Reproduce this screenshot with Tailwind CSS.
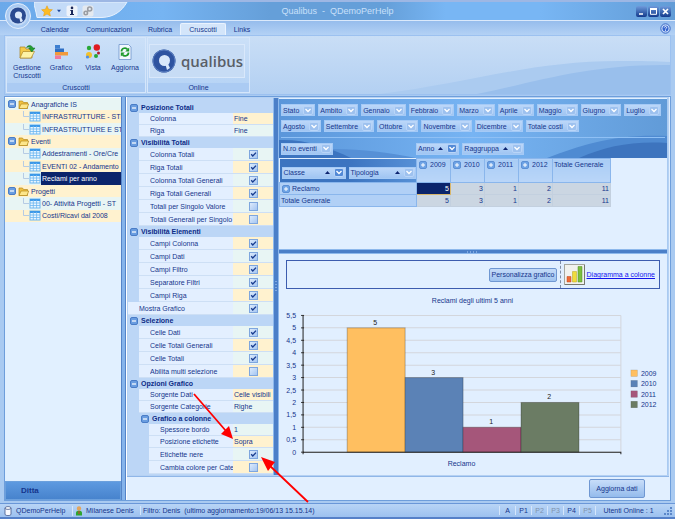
<!DOCTYPE html>
<html lang="it">
<head>
    <meta charset="UTF-8">
    <meta name="viewport" content="width=device-width, initial-scale=1.0">
    <title>Qualibus - QDemoPerHelp</title>
    <script src="https://cdn.jsdelivr.net/npm/@tailwindcss/browser@4"></script>
</head>
<body class="relative flex h-screen flex-col overflow-hidden bg-[#a9caf1] font-['Liberation_Sans',sans-serif] text-[7px] leading-[9px] text-[#15358c]">

    <!-- Title bar -->
    <header class="relative flex h-5 shrink-0 items-center border-t-2 border-[#9db7e4] bg-[linear-gradient(90deg,#6ba9ea_0%,#76b4f2_24%,#659fd9_40%,#659fd9_57%,#78b6f4_66%,#78b6f4_80%,#629cd6_100%)]">
        <svg class="absolute left-[34px] top-0 h-4 w-[94px]" viewBox="0 0 94 16">
            <path d="M0 0H93C88 9 80 15 68 15.500H3C2 9 0 4 0 0Z" fill="#c3dbf8" stroke="#e6f1fe" stroke-width="1"/>
        </svg>
        <nav class="relative ml-[41px] flex items-center gap-1">
            <button aria-label="Preferiti"><svg class="h-3 w-3" viewBox="0 0 12 12"><path d="M6 .8 7.600 4.300 11.400 4.700 8.600 7.200 9.400 11 6 9.100 2.600 11 3.400 7.200.6 4.700 4.400 4.300Z" fill="#fdbb24" stroke="#e59a10" stroke-width=".5"/></svg></button>
            <button aria-label="Apri elenco"><svg class="h-1 w-1" viewBox="0 0 4 4"><path d="M0 .8H4L2 3.200Z" fill="#1c479c"/></svg></button>
            <button class="ml-px h-3 w-3" aria-label="Informazioni"><svg viewBox="0 0 12 12"><rect x=".5" y=".5" width="11" height="11" rx="2" fill="#eef3fa"/><circle cx="6" cy="2.900" r="1.300" fill="#1b2758"/><path d="M4.300 5H7V9H8V10H4V9H5V6H4.300Z" fill="#1b2758"/></svg></button>
            <button class="h-3 w-3" aria-label="Collegamento"><svg viewBox="0 0 12 12"><rect x=".5" y=".5" width="11" height="11" rx="2" fill="#e4e9ef"/><g fill="none" stroke="#9a9da3" stroke-width="1.600"><circle cx="7.700" cy="4" r="2"/><circle cx="3.800" cy="8" r="1.700"/><path d="M6.300 5.500 5 6.800"/></g></svg></button>
        </nav>
        <h1 class="absolute inset-x-0 text-center text-[9px] text-[#c9e0fa]">Qualibus&nbsp; -&nbsp; QDemoPerHelp</h1>
        <div class="relative ml-auto mr-1 flex gap-px">
            <button class="h-[11px] w-[11px] rounded-xs bg-linear-to-b from-[#6f9bdc] to-[#143a8c]" aria-label="Riduci a icona"><svg viewBox="0 0 11 11"><path d="M3 8H7" stroke="#fff" stroke-width="1.500"/></svg></button>
            <button class="h-[11px] w-[11px] rounded-xs bg-linear-to-b from-[#6f9bdc] to-[#143a8c]" aria-label="Ingrandisci"><svg viewBox="0 0 11 11"><path d="M2.500 3V8.300H8.500V3Z" fill="none" stroke="#fff"/><path d="M2 3H9" stroke="#fff" stroke-width="2"/></svg></button>
            <button class="h-[11px] w-[11px] rounded-xs bg-linear-to-b from-[#6f9bdc] to-[#143a8c]" aria-label="Chiudi"><svg viewBox="0 0 11 11"><path d="M3 3 8 8M8 3 3 8" stroke="#fff" stroke-width="1.700"/></svg></button>
        </div>
    </header>

    <!-- Ribbon tabs -->
    <nav class="flex h-[15px] shrink-0 items-end border-t border-[#dbe9fb] bg-linear-to-b from-[#96bcec] to-[#b3d1f5] pl-[32px] pr-1">
        <a href="#" class="flex h-3 w-[46px] items-center justify-center">Calendar</a>
        <a href="#" class="flex h-3 w-[62px] items-center justify-center">Comunicazioni</a>
        <a href="#" class="flex h-3 w-[40px] items-center justify-center">Rubrica</a>
        <a href="#" class="flex h-3 w-[46px] items-center justify-center rounded-t-xs border border-b-0 border-[#eaf3fe] bg-[#d3e5fa]">Cruscotti</a>
        <a href="#" class="flex h-3 w-[32px] items-center justify-center">Links</a>
        <button class="mb-px ml-auto h-[11px] w-[11px]" aria-label="Aiuto"><svg viewBox="0 0 11 11"><circle cx="5.500" cy="5.500" r="4.700" fill="#c9dcf8" stroke="#3868c6"/><circle cx="5.500" cy="5.500" r="3" fill="#3565d0"/><path d="M4.300 4.600C4.300 3 6.800 3.200 6.600 4.700 6.400 5.500 5.500 5.400 5.500 6.500M5.500 7.200V8" fill="none" stroke="#fff" stroke-width=".9"/></svg></button>
    </nav>

    <!-- Ribbon -->
    <section class="relative mx-1 flex h-[60px] shrink-0 gap-px border border-[#9cc1f0] bg-linear-to-b from-[#c9def6] to-[#b3d0f2] p-px">
        <svg class="absolute bottom-0 right-0 h-[33px] w-[290px]" viewBox="0 0 290 33" preserveAspectRatio="none">
            <path d="M0 33C90 22 150 0 240 0 262 0 275 0 290 1V33Z" fill="#abcbf0"/>
            <path d="M97 33C160 20 210 3 290 4V33Z" fill="#99bfec"/>
        </svg>
        <div class="relative flex w-[140px] flex-col border border-[#d5e6fb] bg-linear-to-b from-[#cbe0f8] to-[#b4d2f5]">
            <div class="flex flex-1 justify-between px-1 pt-[5px]">
                <button class="flex w-8 flex-col items-center gap-[3px] leading-[8px]">
                    <svg class="h-[18px] w-[18px] shrink-0" viewBox="0 0 18 18"><path d="M2 4H7L8 6H14V15H2Z" fill="#f3c949" stroke="#a98321" stroke-width=".7"/><path d="M2 15 5 8.500H16.500L13 15Z" fill="#fdf3a6" stroke="#b08a28" stroke-width=".7"/><path d="M8.500 4.500C10 1.500 14 1.800 14.700 5H17L13.800 9 10.600 5H12.500C12 3.800 10.500 3.500 8.500 4.500Z" fill="#23a032" stroke="#0c6a1b" stroke-width=".5"/></svg>
                    <span>Gestione Cruscotti</span>
                </button>
                <button class="flex w-8 flex-col items-center gap-[3px] leading-[8px]">
                    <svg class="h-[18px] w-[18px] shrink-0" viewBox="0 0 18 18"><path d="M3 2H8V5.500H3Z" fill="#3d7fd1"/><path d="M3 5.500H12V9H3Z" fill="#2f6fc4"/><path d="M3 9H16V12.500H3Z" fill="#f19a3c"/><path d="M3 12.500H9V16H3Z" fill="#f1799c"/></svg>
                    <span>Grafico</span>
                </button>
                <button class="flex w-7 flex-col items-center gap-[3px] leading-[8px]">
                    <svg class="h-[18px] w-[18px] shrink-0" viewBox="0 0 18 18"><circle cx="5" cy="5" r="2.200" fill="#28a838"/><circle cx="12.800" cy="4.500" r="3.200" fill="#e01b22"/><circle cx="5" cy="12" r="3" fill="#f2c12c"/><circle cx="3.500" cy="14" r="1.600" fill="#4f8fe8"/><circle cx="12" cy="13" r="2" fill="#28a838"/><circle cx="14.500" cy="10" r="1.500" fill="#b31b2e"/></svg>
                    <span>Vista</span>
                </button>
                <button class="flex w-8 flex-col items-center gap-[3px] leading-[8px]">
                    <svg class="h-[18px] w-[18px] shrink-0" viewBox="0 0 18 18"><path d="M3 1.500H12.500L15 4V16.500H3Z" fill="#f2f8ff" stroke="#6d93c9" stroke-width=".8"/><path d="M5.500 8.500C5.500 5 10 4 11.500 6.500M12.500 9.500C12.500 13 8 14 6.500 11.500" fill="none" stroke="#1d9a2c" stroke-width="1.800"/><path d="M13.200 4.500V8.500H9.200ZM4.800 13.500V9.500H8.800Z" fill="#1d9a2c"/></svg>
                    <span>Aggiorna</span>
                </button>
            </div>
            <div class="h-[9px] bg-[#abcbf3] text-center">Cruscotti</div>
        </div>
        <div class="relative flex w-[103px] flex-col border border-[#d5e6fb] bg-linear-to-b from-[#cbe0f8] to-[#b4d2f5]">
            <div class="mx-px mr-[4px] mt-[6px] flex h-[34px] items-center gap-[5px] border border-[#d9e8fb] bg-[#c7dcf5] pl-[2px]">
                <svg class="h-6 w-6 shrink-0" viewBox="0 0 24 24"><circle cx="12" cy="12" r="11.500" fill="#2e53a0"/><circle cx="12" cy="12" r="11" fill="none" stroke="#5a7ec0"/><circle cx="12.500" cy="11.500" r="5.500" fill="#d8e7fa"/><path d="M13 14 15 13 18 19 15 21Z" fill="#d8e7fa"/></svg>
                <span class="font-['Open_Sans',sans-serif] text-[15px] font-semibold leading-5 text-[#5a5f68]">qualibus</span>
            </div>
            <div class="mt-auto h-[9px] bg-[#abcbf3] text-center">Online</div>
        </div>
    </section>

    <!-- Work area -->
    <main class="mx-1 mt-px flex min-h-0 flex-1 border border-[#6e9edb] bg-[#e1efff]">
        <aside class="flex w-[116px] shrink-0 flex-col border-t border-white">
            <ul id="tree" class="flex h-[124px] flex-col"></ul>
            <div class="flex-1 bg-[#e1f0ff]"></div>
            <button class="h-[19px] border border-[#6ba0dd] bg-linear-to-b from-[#5e9ae0] to-[#4783cd] pl-[15px] text-left text-[8px] font-bold">Ditta</button>
        </aside>
        <div class="w-[5px] shrink-0 border-x border-[#5584c8] bg-[#86b4eb]"></div>

        <div class="flex min-w-0 flex-1 flex-col border-l border-white pr-px">
            <div class="flex min-h-0 flex-1 border border-[#b5d1f3]">
                <form id="props" class="w-[145px] shrink-0 overflow-hidden bg-[#bcd6f6] pt-1"></form>
                <div class="grid w-[6px] shrink-0 place-items-center border-x border-[#8db8ec] bg-[#4b7fc8]">
                    <svg class="h-3 w-[2px]" viewBox="0 0 2 12"><path d="M1 0V12" stroke="#b9d5f8" stroke-dasharray="1 2"/></svg>
                </div>

                <div class="flex min-w-0 flex-1 flex-col border-r border-[#a9caf1] pt-px">
                    <!-- Pivot -->
                    <section class="h-[150px] shrink-0">
                        <div class="relative bg-linear-to-r from-[#5a96da] via-[#77b4f3] to-[#619bd8]">
                            <svg class="absolute bottom-0 right-0 h-6 w-[120px]" viewBox="0 0 120 24" preserveAspectRatio="none">
                                <path d="M0 24C35 11 65 0 120 2V24Z" fill="#4f8bd2"/>
                                <path d="M32 24C60 12 85 7 120 9V24Z" fill="#3d74be"/>
                            </svg>
                            <svg class="absolute bottom-0 left-0 h-5 w-[137px]" viewBox="0 0 137 20" preserveAspectRatio="none">
                                <path d="M30 12C70 9 100 13 137 20H30Z" fill="#5690d6"/>
                                <path d="M0 2C25 1 50 9 72 20H0Z" fill="#3c74c0"/>
                            </svg>
                            <div id="filters" class="relative mx-[2px] flex flex-wrap gap-x-[3px] gap-y-1 border-b border-[#8fc0f5] pb-[5px] pt-[5px]"></div>
                            <div class="relative flex h-5 items-center pl-[2px] pt-px">
                                <div class="w-[135px] shrink-0" data-pills="N.ro eventi"></div>
                                <div class="flex gap-[3px]" data-pills="Anno^*,Raggruppa^"></div>
                            </div>
                        </div>
                        <table class="w-[332px] table-fixed border-collapse">
                            <thead>
                                <tr class="h-6 align-top">
                                    <th class="w-[137px] bg-linear-to-r from-[#3c74c0] from-50% to-[#5690d6] p-0 font-normal">
                                        <div class="flex gap-[3px] pl-[2px] pt-[8px]" data-pills="Classe^*,Tipologia^"></div>
                                    </th>
                                    <th class="border border-[#8ab6ec] bg-linear-to-b from-[#a9ccf5] to-[#bad6f8] p-0 font-normal"><div class="flex items-center gap-[3px] pl-[2px] pt-px" data-plus>2009</div></th>
                                    <th class="border border-[#8ab6ec] bg-linear-to-b from-[#a9ccf5] to-[#bad6f8] p-0 font-normal"><div class="flex items-center gap-[3px] pl-[2px] pt-px" data-plus>2010</div></th>
                                    <th class="border border-[#8ab6ec] bg-linear-to-b from-[#a9ccf5] to-[#bad6f8] p-0 font-normal"><div class="flex items-center gap-[3px] pl-[2px] pt-px" data-plus>2011</div></th>
                                    <th class="border border-[#8ab6ec] bg-linear-to-b from-[#a9ccf5] to-[#bad6f8] p-0 font-normal"><div class="flex items-center gap-[3px] pl-[2px] pt-px" data-plus>2012</div></th>
                                    <th class="w-[58px] border border-[#8ab6ec] bg-linear-to-b from-[#a9ccf5] to-[#bad6f8] p-0 pl-px pt-px text-left font-normal">Totale Generale</th>
                                </tr>
                            </thead>
                            <tbody class="bg-[#cbd6e2] text-right">
                                <tr class="h-3">
                                    <th class="border border-[#8ab6ec] bg-[#b1d0f6] p-0 font-normal"><div class="flex items-center gap-[2px] pl-[2px]" data-plus>Reclamo</div></th>
                                    <td class="border border-[#d8b66c] bg-[#0b246b] p-0 pr-px text-white">5</td>
                                    <td class="border border-[#c3d0df] p-0 pr-px">3</td>
                                    <td class="border border-[#c3d0df] p-0 pr-px">1</td>
                                    <td class="border border-[#c3d0df] p-0 pr-px">2</td>
                                    <td class="border border-[#c3d0df] p-0 pr-px">11</td>
                                </tr>
                                <tr class="h-3">
                                    <th class="border border-[#8ab6ec] bg-[#b1d0f6] p-0 pl-px text-left font-normal">Totale Generale</th>
                                    <td class="border border-[#c3d0df] p-0 pr-px">5</td>
                                    <td class="border border-[#c3d0df] p-0 pr-px">3</td>
                                    <td class="border border-[#c3d0df] p-0 pr-px">1</td>
                                    <td class="border border-[#c3d0df] p-0 pr-px">2</td>
                                    <td class="border border-[#c3d0df] p-0 pr-px">11</td>
                                </tr>
                            </tbody>
                        </table>
                    </section>
                    <div class="grid h-[5px] shrink-0 place-items-center border-y border-[#8db8ec] bg-[#4b7fc8]">
                        <svg class="h-[2px] w-3" viewBox="0 0 12 2"><path d="M0 1H12" stroke="#b9d5f8" stroke-dasharray="1 2"/></svg>
                    </div>

                    <!-- Chart -->
                    <section class="flex min-h-0 flex-1 flex-col">
                        <div class="mx-[7px] mt-[6px] flex h-[29px] shrink-0 items-center justify-end border border-[#3c5cae] pr-1">
                            <button class="h-[14px] rounded-xs border border-[#6f97d2] bg-linear-to-b from-[#c5dbf8] to-[#9fc3f0] px-px">Personalizza grafico</button>
                            <div class="ml-[3px] h-full border-l border-dashed border-[#7f8da5]"></div>
                            <svg class="ml-[3px] h-[21px] w-[21px]" viewBox="0 0 21 21"><rect x=".5" y=".5" width="20" height="20" fill="#f1f2ee" stroke="#a5a79f"/><path d="M20.500 1V20.500H1" fill="none" stroke="#76786f"/><path d="M3 12.500H7V18H3Z" fill="#ee6a35" stroke="#c2441c" stroke-width=".5"/><path d="M8.500 7.500H12.500V18H8.500Z" fill="#f0dc3c" stroke="#b9a31c" stroke-width=".5"/><path d="M14 2.500H18V18H14Z" fill="#7cbf3f" stroke="#4f8d22" stroke-width=".5"/></svg>
                            <a href="#" class="ml-[2px] text-[#1212ee] underline">Diagramma a colonne</a>
                        </div>
                        <svg id="chart" class="min-h-0 w-full flex-1" viewBox="0 0 387 184" font-size="7" fill="#15358c"></svg>
                    </section>
                </div>
            </div>
            <div class="flex h-[24px] shrink-0 items-center justify-end border-t border-[#8fb6e8] pr-6">
                <button class="h-[19px] w-14 rounded-xs border border-[#6f97d2] bg-linear-to-b from-[#c8ddf9] to-[#94bbec]">Aggiorna dati</button>
            </div>
        </div>
    </main>

    <!-- Status bar -->
    <footer class="mt-[2px] flex h-[16px] shrink-0 items-center border-b-2 border-t border-b-[#5580c8] border-t-[#6a97d8] bg-linear-to-b from-[#b8d4f6] to-[#9cc1ef] pl-1">
        <div class="flex w-[68px] items-center gap-1"><svg class="h-[10px] w-2" viewBox="0 0 8 10"><path d="M1 2V8.500C2 10 6 10 7 8.500V2" fill="#f7f9ff" stroke="#42588c" stroke-width=".8"/><ellipse cx="4" cy="2" rx="3" ry="1.400" fill="#fff" stroke="#42588c" stroke-width=".8"/></svg>QDemoPerHelp</div>
        <div class="flex w-[68px] items-center gap-[3px] border-l border-[#d5e6fb] pl-[2px]"><svg class="h-[10px] w-2" viewBox="0 0 8 10"><circle cx="4" cy="2.500" r="2.200" fill="#e4a55c"/><path d="M1 9.500V6.500C1 4 7 4 7 6.500V9.500Z" fill="#2ea52f"/><path d="M3.500 5H4.500V8H3.500Z" fill="#e23c2c"/></svg>Milanese Denis</div>
        <div class="flex-1 whitespace-nowrap border-l border-[#d5e6fb] pl-[2px]">Filtro: Denis&nbsp; (ultimo aggiornamento:19/06/13 15.15.14)</div>
        <div class="w-4 border-l border-[#d5e6fb] text-center">A</div>
        <div class="w-4 border-l border-[#d5e6fb] text-center">P1</div>
        <div class="w-4 border-l border-[#d5e6fb] text-center text-[#7f92ad]">P2</div>
        <div class="w-4 border-l border-[#d5e6fb] text-center text-[#7f92ad]">P3</div>
        <div class="w-4 border-l border-[#d5e6fb] text-center">P4</div>
        <div class="w-4 border-l border-[#d5e6fb] text-center text-[#7f92ad]">P5</div>
        <div class="w-[66px] border-l border-[#d5e6fb] text-center">Utenti Online : 1</div>
        <svg class="h-3 w-[14px]" viewBox="0 0 14 12" fill="#5b87c9"><path d="M9 2H11V4H9ZM9 5H11V7H9ZM6 5H8V7H6ZM9 8H11V10H9ZM6 8H8V10H6ZM3 8H5V10H3Z"/></svg>
    </footer>

    <!-- Application button -->
    <button class="absolute left-[5px] top-[3px] h-[26px] w-[26px]" aria-label="Menu applicazione">
        <svg viewBox="0 0 26 26"><circle cx="13" cy="13" r="12.500" fill="#a9caf2" stroke="#e4effd"/><circle cx="13" cy="13" r="9.500" fill="#c4daf6"/><circle cx="13" cy="12.500" r="8" fill="#2a4a90"/><circle cx="13.500" cy="12" r="3.600" fill="#dbe8fa"/><path d="M14 14 15.500 13 18 18 15.500 19.500Z" fill="#dbe8fa"/></svg>
    </button>

    <!-- Callout arrows -->
    <svg class="pointer-events-none absolute left-[190px] top-[390px] h-[116px] w-[122px]" viewBox="0 0 122 116" fill="#f00" stroke="#f00">
        <path d="M4 4 36 41M118 112 78 74" stroke-width="1.800"/>
        <path d="M43 49 31 44 39 36ZM71 67 85 72 78 81Z" stroke="none"/>
    </svg>

    <script>
        const minus = `<svg class="h-2 w-2 shrink-0" viewBox="0 0 8 8"><rect x=".5" y=".5" width="7" height="7" rx="1.500" fill="#6a9de0" stroke="#4a7cc6"/><path d="M2 4H6" stroke="#fff" stroke-width="1.200"/></svg>`;
        const plus = `<svg class="h-2 w-2 shrink-0" viewBox="0 0 8 8"><rect x=".5" y=".5" width="7" height="7" rx="1.500" fill="#6fa4e6" stroke="#5b8fd4"/><path d="M2 4H6M4 2V6" stroke="#fff"/></svg>`;

        // Tree of dashboards, two levels
        const tree = [
            ["Anagrafiche IS", ["INFRASTRUTTURE - STR", "INFRASTRUTTURE E STR"]],
            ["Eventi", ["Addestramenti - Ore/Cre", "EVENTI 02 - Andamento", "Reclami per anno"]],
            ["Progetti", ["00- Attività Progetti - ST", "Costi/Ricavi dal 2008"]],
        ];
        const folder = `<svg class="h-[11px] w-[11px] shrink-0" viewBox="0 0 11 11"><path d="M1 2H4.500L5.500 3.500H9.500V9.500H1Z" fill="#f0c040" stroke="#b58a1c" stroke-width=".7"/><path d="M1 9.500 3 5H10.700L9 9.500Z" fill="#fde68a" stroke="#b58a1c" stroke-width=".7"/></svg>`;
        const sheet = `<svg class="h-[11px] w-[22px] shrink-0" viewBox="0 0 22 11"><path d="M4.500 0V5.500H10" fill="none" stroke="#b6cbe4"/><rect x="11" y="1" width="10" height="9" fill="#e9f6ff" stroke="#6db6f0"/><path d="M11 2H21" stroke="#3c98e8" stroke-width="2"/><path d="M14.300 2V10M17.600 2V10M11 5H21M11 7.500H21" stroke="#6db6f0" stroke-width=".8"/></svg>`;
        let row = 0;
        let treeHtml = "";
        for (const [group, items] of tree) {
            treeHtml += `<li class="flex min-h-0 flex-1 items-center gap-[2px] pl-[3px] ${row++ % 2 ? "bg-[#fff2cf]" : "bg-[#e8f5f4]"}">${minus}${folder}<span>${group}</span></li>`;
            for (const item of items) {
                const tone = row++ % 2 ? "bg-[#fff2cf]" : "bg-[#e8f5f4]";
                const label = item === "Reclami per anno" ? "bg-[#0b246b] text-white" : "";
                treeHtml += `<li class="flex min-h-0 flex-1 items-center pl-[14px] ${tone}">${sheet}<a href="#" class="flex h-full min-w-0 flex-1 items-center overflow-hidden whitespace-nowrap pl-px ${label}">${item}</a></li>`;
            }
        }
        document.getElementById("tree").innerHTML = treeHtml;

        // Property grid: [label, value]; true/false is a tick box, no value is a heading
        const props = [
            ["Posizione Totali"], ["Colonna", "Fine"], ["Riga", "Fine"],
            ["Visibilità Totali"], ["Colonna Totali", true], ["Riga Totali", true], ["Colonna Totali Generali", true],
            ["Riga Totali Generali", true], ["Totali per Singolo Valore", false], ["Totali Generali per Singolo", false],
            ["Visibilità Elementi"], ["Campi Colonna", true], ["Campi Dati", true], ["Campi Filtro", true],
            ["Separatore Filtri", true], ["Campi Riga", true], ["Mostra Grafico", true, "root"],
            ["Selezione"], ["Celle Dati", true], ["Celle Totali Generali", true], ["Celle Totali", true], ["Abilita multi selezione", false],
            ["Opzioni Grafico"], ["Sorgente Dati", "Celle visibili"], ["Sorgente Categorie", "Righe"],
            ["Grafico a colonne", undefined, "sub"], ["Spessore bordo", "1", "sub"], ["Posizione etichette", "Sopra", "sub"],
            ["Etichette nere", true, "sub"], ["Cambia colore per Cate", false, "sub"],
        ];
        const yellow = [1, 5, 7, 9, 11, 13, 15, 19, 21, 23, 27, 29];
        document.getElementById("props").innerHTML = props.map(([label, value, level], i) => {
            if (value === undefined) {
                return `<h2 class="flex h-[11px] items-center gap-[3px] text-[#0d2c86] font-bold ${level ? "pl-[13px]" : "pl-[2px]"}">${minus}${label}</h2>`;
            }
            const check = typeof value === "boolean";
            const indent = level === "root" ? "pl-[11px]" : level === "sub" ? "ml-[21px] pl-[11px]" : "ml-[11px] pl-[11px]";
            const field = check
                ? `<span class="grid place-items-center"><input id="p${i}" type="checkbox" ${value ? "checked" : ""} class="peer col-start-1 row-start-1 h-[9px] w-[9px] appearance-none border border-[#7ea6de] bg-linear-to-br from-[#dceafb] to-[#a5c6f2]"><svg class="pointer-events-none invisible col-start-1 row-start-1 h-[7px] w-[7px] peer-checked:visible" viewBox="0 0 7 7"><path d="M1.200 3.200 2.800 5 6 1.600" fill="none" stroke="#173b8e" stroke-width="1.300"/></svg></span>`
                : `<input id="p${i}" value="${value}" class="h-[9px] w-full min-w-0 pl-px">`;
            return `<div class="flex ${check ? "h-[13px]" : "h-3"} ${indent} border-b border-[#cddff5] bg-[#e3efff]">
                <label for="p${i}" class="flex min-w-0 flex-1 items-center overflow-hidden whitespace-nowrap">${label}</label>
                <div class="flex w-10 shrink-0 items-center justify-center ${yellow.includes(i) ? "bg-[#fff2cf]" : "bg-[#e8f5f4]"}">${field}</div>
            </div>`;
        }).join("");

        // Field pills: ^ adds the sort arrow, * marks an active filter
        function pill(text) {
            const name = text.replace(/[\^*]/g, "");
            const wide = name === "Classe" ? "w-16" : name === "Tipologia" ? "w-[67px]" : "";
            const sort = text.includes("^") ? `<svg class="ml-auto h-[3px] w-[5px]" viewBox="0 0 5 3"><path d="M0 3H5L2.500 0Z" fill="#0d2470"/></svg>` : "";
            const active = text.includes("*") ? "bg-[#5289d6]" : "bg-[#9dc1ef]";
            return `<button class="inline-flex h-3 items-center gap-1 border border-[#a5caf6] bg-linear-to-b from-[#bcd7f9] to-[#a0c5f2] pl-px pr-px ${wide}">${name}${sort}<span class="h-[9px] w-[10px] rounded-xs border border-[#b9d5f8] ${active}"><svg viewBox="0 0 8 7"><path d="M1.500 2 4 4.500 6.500 2" fill="none" stroke="#fff" stroke-width="1.300"/></svg></span></button>`;
        }
        const filters = ["Stato", "Ambito", "Gennaio", "Febbraio", "Marzo", "Aprile", "Maggio", "Giugno", "Luglio",
            "Agosto", "Settembre", "Ottobre", "Novembre", "Dicembre", "Totale costi"];
        document.getElementById("filters").innerHTML = filters.map(pill).join("");
        document.querySelectorAll("[data-pills]").forEach(el => el.innerHTML = el.dataset.pills.split(",").map(pill).join(""));
        document.querySelectorAll("[data-plus]").forEach(el => el.insertAdjacentHTML("afterbegin", plus));

        // Column chart
        const series = [["2009", 5, "#ffbf60"], ["2010", 3, "#5b82b6"], ["2011", 1, "#a5567a"], ["2012", 2, "#6b7c64"]];
        const zero = 162, unit = 24.8;
        let chart = `<text x="193" y="13" text-anchor="middle">Reclami degli ultimi 5 anni</text>`;
        for (let v = 0; v <= 5.5; v += 0.5) {
            const y = zero - v * unit;
            chart += `<path d="M24 ${y}H341" stroke="#d3d6dc"/><path d="M22 ${y}H25" stroke="#333"/>
                <text x="17" y="${y + 2.5}" text-anchor="end">${String(v).replace(".", ",")}</text>`;
        }
        chart += `<path d="M341 ${zero}V${zero - 5.5 * unit}" stroke="#d3d6dc"/>`;
        series.forEach(([year, value, color], i) => {
            const x = 68 + i * 57.8, y = zero - value * unit;
            chart += `<rect x="${x}" y="${y}" width="57.8" height="${value * unit}" fill="${color}" stroke="#000" stroke-opacity=".25"/>
                <text x="${x + 28}" y="${y - 3}" text-anchor="middle" fill="#222">${value}</text>
                <rect x="351" y="${80 + i * 10.4}" width="6.500" height="6.500" fill="${color}" stroke="#000" stroke-opacity=".2" stroke-width=".5"/>
                <text x="361" y="${86 + i * 10.4}">${year}</text>`;
        });
        chart += `<path d="M24 ${zero - 5.5 * unit}V${zero + 2}M24 ${zero}H341V${zero + 2}" fill="none" stroke="#222"/>
            <text x="182" y="176" text-anchor="middle">Reclamo</text>`;
        document.getElementById("chart").innerHTML = chart;
    </script>
</body>
</html>
